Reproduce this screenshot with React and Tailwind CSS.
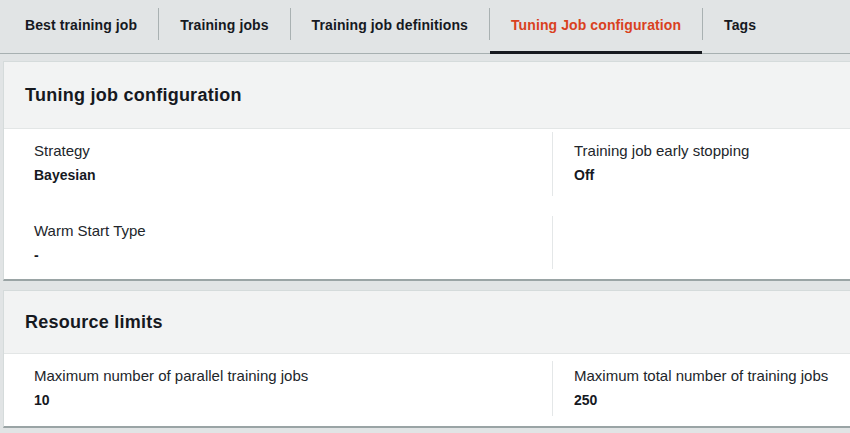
const tabs = [
  { label: 'Best training job' },
  { label: 'Training jobs' },
  { label: 'Training job definitions' },
  { label: 'Tuning Job configuration', active: true },
  { label: 'Tags' },
];

const Field = ({ label, value, divider, className = '' }) => (
  <div className={`${divider ? 'border-l border-[#e4e7e8] pl-[21px]' : 'pl-[30px]'} ${className}`}>
    <div className="text-[15px] leading-[20px] text-[#22262b]">{label}</div>
    <div className="text-[14px] leading-[20px] font-bold mt-[4px]">{value}</div>
  </div>
);

const Panel = ({ title, children, headerClass }) => (
  <div className="bg-white border-t border-l border-[#d5dbdb] border-b-2 border-b-[#9aa4a5]">
    <div className={`bg-[#f2f3f3] border-b border-[#e3e6e6] flex items-center pl-[21px] ${headerClass}`}>
      <h2 className="text-[18px] font-bold tracking-[0.25px]">{title}</h2>
    </div>
    {children}
  </div>
);

export default function App() {
  return (
    <div className="w-[850px] h-[433px] overflow-hidden bg-[#e1e4e5] text-[#16191f] font-['Liberation_Sans',Arial,sans-serif]">
      <div className="flex items-stretch h-[54px] border-b border-[#a7b0b1] pl-[4px]">
        {tabs.map((t, i) => (
          <div key={t.label} className="flex items-stretch">
            {i > 0 && <div className="w-px h-[32px] self-center -mt-[6px] bg-[#a9b1b2]" />}
            <div
              className={`flex items-center px-[21px] border-b-[3px] -mb-px text-[14px] font-bold tracking-[0.1px] ${
                t.active ? 'border-[#16191f] text-[#d9411e]' : 'border-transparent'
              }`}
            >
              {t.label}
            </div>
          </div>
        ))}
      </div>

      <div className="flex flex-col gap-[9px] pl-[3px] pt-[7px]">
        <Panel title="Tuning job configuration" headerClass="h-[67px]">
          <div className="grid grid-cols-[548px_1fr] pt-[3px] pb-[10px]">
            <Field label="Strategy" value="Bayesian" className="pt-[9px] h-[64px]" />
            <Field label="Training job early stopping" value="Off" divider className="pt-[9px] h-[64px]" />
            <Field label="Warm Start Type" value="-" className="pt-[5px] h-[53px] mt-[20px]" />
            <div className="border-l border-[#e4e7e8] h-[53px] mt-[20px]" />
          </div>
        </Panel>

        <Panel title="Resource limits" headerClass="h-[63px]">
          <div className="grid grid-cols-[548px_1fr] pt-[7px] pb-[10px]">
            <Field label="Maximum number of parallel training jobs" value="10" className="pt-[5px] h-[55px]" />
            <Field label="Maximum total number of training jobs" value="250" divider className="pt-[5px] h-[55px]" />
          </div>
        </Panel>
      </div>
    </div>
  );
}
